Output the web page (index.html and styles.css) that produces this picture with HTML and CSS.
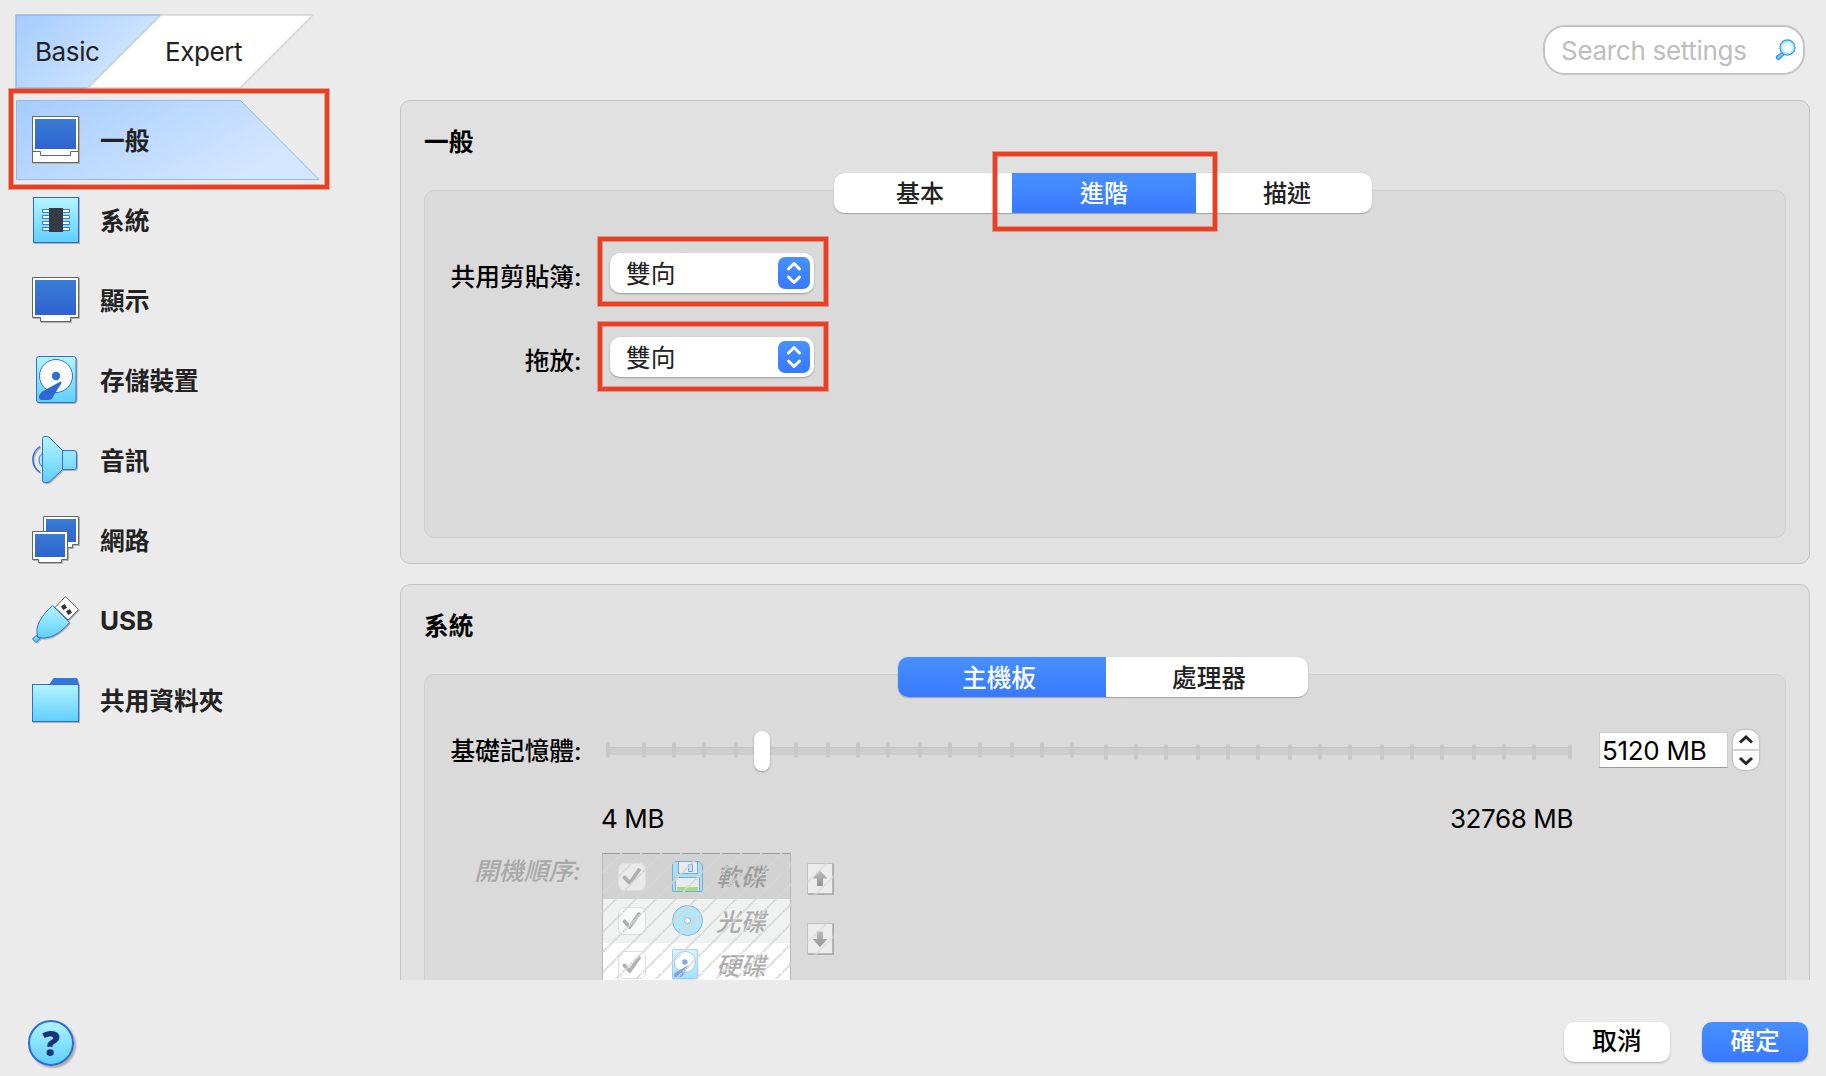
FILE: index.html
```html
<!DOCTYPE html>
<html lang="zh-Hant">
<head>
<meta charset="utf-8">
<title>設定</title>
<link rel="stylesheet" href="styles.css">
</head>
<body>
<svg class="defs" width="0" height="0" aria-hidden="true">
  <defs>
    <linearGradient id="cyan" x1="0" y1="0" x2="0" y2="1"><stop offset="0" stop-color="#b5f5ff"/><stop offset="1" stop-color="#60cfff"/></linearGradient>
    <linearGradient id="blue" x1="0" y1="0" x2="0" y2="1"><stop offset="0" stop-color="#387dd2"/><stop offset="1" stop-color="#2f62d2"/></linearGradient>
    <linearGradient id="tab" x1="0" y1="0" x2="1" y2=".5"><stop offset="0" stop-color="#a5ccff"/><stop offset="1" stop-color="#d5e7ff"/></linearGradient>
    <linearGradient id="arrow" x1="0" y1="0" x2="0" y2="1"><stop offset="0" stop-color="#bdbdbd"/><stop offset="1" stop-color="#939393"/></linearGradient>
    <pattern id="hatch" width="20" height="20" patternUnits="userSpaceOnUse"><path d="M-1 21L21-1" stroke="#d6d6d6" stroke-width="2" stroke-dasharray="2.2 .6"/></pattern>
    <symbol id="disk" viewBox="0 0 42 48"><rect x=".5" y=".5" width="39.500" height="46" rx="2.500" fill="url(#cyan)" stroke="#3070d6"/><circle cx="20" cy="20" r="16.500" fill="#fff" stroke="#3070d6"/><circle cx="20" cy="20" r="4.200" fill="#2f6fd4"/><path d="M24.500 25.500L9 34C4 37 3 39 3 41c0 2 1 3 3 3h6c3 0 5-2 6-5l7-11c1-2 0-3-.5-2.500z" fill="#2f67d4"/></symbol>
  </defs>
</svg>
<div class="window">
  <header class="topbar">
    <div class="modes">
      <svg class="modes-shape" width="302" height="76"><path d="M1 1H146L73 74H1z" fill="url(#tab)" stroke="#93b9ea" stroke-width="1.500"/><path d="M146 1H298L225 74H73z" fill="#fff" stroke="#d4d4d4" stroke-width="1.500"/></svg>
      <span class="mode basic">Basic</span><span class="mode expert">Expert</span>
    </div>
    <div class="search"><span>Search settings</span>
      <svg width="22" height="22" viewBox="0 0 22 22"><path d="M8 13l-6 4c-1.500 1.500 0 4 2 3.500L9.500 15" fill="#62d0fb" stroke="#3f8fe8" stroke-width="1.200"/><circle cx="12.500" cy="8.500" r="7.500" fill="#f3fdff" stroke="#4598ed" stroke-width="1.400"/><circle cx="12.500" cy="8.500" r="6.100" fill="none" stroke="#9ce8fc" stroke-width="1.500"/></svg>
    </div>
  </header>

  <div class="content">
    <nav class="sidebar">
      <div class="item active">
        <svg class="item-shape" width="305" height="81"><path d="M.5.500H224.500L303 79.500H.5z" fill="url(#tab)" stroke="#93b9ea"/></svg>
        <svg class="icon" viewBox="0 0 48 48"><rect x=".5" y=".5" width="46" height="46" fill="#fff" stroke="#666"/><rect x="3" y="3" width="41" height="30" fill="url(#blue)"/><path d="M.5 35.500H8.500V39.500H38.500V35.500H46.500" fill="none" stroke="#666"/></svg>
        <span>一般</span>
      </div>
      <div class="item">
        <svg class="icon" viewBox="0 0 48 48"><rect x="1.500" y="1.500" width="45" height="45" fill="url(#cyan)" stroke="#2f68d4"/><g fill="#fff" stroke="#327bd0"><path d="M10.500 13.500h27v3h-27zM10.500 19.500h27v3h-27zM10.500 25.500h27v3h-27zM10.500 31.500h27v3h-27z"/></g><rect x="17" y="12" width="14" height="24" fill="#363a45"/></svg>
        <span>系統</span>
      </div>
      <div class="item">
        <svg class="icon" viewBox="0 0 48 48"><path d="M.5 1.500H46.500V41.500H38.500V45.500H8.500V41.500H.5z" fill="#fff" stroke="#666"/><rect x="3" y="4" width="41" height="35" fill="url(#blue)"/></svg>
        <span>顯示</span>
      </div>
      <div class="item">
        <svg class="icon" viewBox="0 0 48 48"><use href="#disk" x="4" y="0" width="42" height="48"/></svg>
        <span>存儲裝置</span>
      </div>
      <div class="item">
        <svg class="icon" viewBox="0 0 48 48"><path d="M8 10.500C-1.500 17-1.500 30 8 36.500" fill="none" stroke="#3070d6" stroke-width="1.500"/><path d="M10.500 18C6 18 6 30 10.500 30" fill="#a5edfd" stroke="#3070d6"/><path d="M10.500 2.500Q10.500.500 13 .500H15Q17 .500 18.500 2.500L30.500 14.500H42Q44.500 14.500 44.500 17V31Q44.500 33.500 42 33.500H30.500L18.500 45Q17 46.500 15 46.500H13Q10.500 46.500 10.500 44.500z" fill="url(#cyan)" stroke="#3070d6"/><path d="M30.500 14.500v19" stroke="#3070d6"/></svg>
        <span>音訊</span>
      </div>
      <div class="item">
        <svg class="icon" viewBox="0 0 48 48"><path d="M11.500.500H46.500V28.500H40.500V31.500H17.500V28.500H11.500z" fill="#fff" stroke="#666"/><rect x="14" y="3" width="30" height="23" fill="url(#blue)"/><path d="M.5 15.500H35.500V43.500H29.500V46.500H6.500V43.500H.5z" fill="#fff" stroke="#666"/><rect x="3" y="18" width="30" height="23" fill="url(#blue)"/></svg>
        <span>網路</span>
      </div>
      <div class="item">
        <svg class="icon" viewBox="0 0 48 48"><path d="M23 11.500L33.500.500 46.500 13.500 36 24z" fill="#fff" stroke="#666"/><path d="M29.500 10.500l3-2 2 3-3 2zM34.500 15.500l3-2 2 3-3 2z" fill="#333" stroke="#333"/><path d="M20.500 9.500L37.500 26.500C28 38 17 44 6.500 41.500C2 33 7 22 20.500 9.500z" fill="url(#cyan)" stroke="#3070d6"/><path d="M4 39.500L.5 43 4 46.500 8 42.500z" fill="#6bd2fa" stroke="#3070d6"/></svg>
        <span class="latin">USB</span>
      </div>
      <div class="item">
        <svg class="icon" viewBox="0 0 48 48"><path d="M17 9L21.500 2H45L47 9z" fill="#3577d6"/><rect x=".5" y="8.500" width="46" height="37" fill="url(#cyan)" stroke="#306fd6"/></svg>
        <span>共用資料夾</span>
      </div>
    </nav>

    <main class="pages">
      <section class="panel general">
        <h2>一般</h2>
        <div class="box">
          <div class="segments three"><span>基本</span><span class="on">進階</span><span>描述</span></div>
          <div class="field"><label>共用剪貼簿:</label>
            <div class="combo"><span>雙向</span><svg class="knob" viewBox="0 0 32 32"><path d="M10.500 12L16 6.500 21.500 12M10.500 20L16 25.500 21.500 20"/></svg></div></div>
          <div class="field"><label>拖放:</label>
            <div class="combo"><span>雙向</span><svg class="knob" viewBox="0 0 32 32"><path d="M10.500 12L16 6.500 21.500 12M10.500 20L16 25.500 21.500 20"/></svg></div></div>
        </div>
      </section>

      <section class="panel system">
        <h2>系統</h2>
        <div class="box">
          <div class="segments two"><span class="on">主機板</span><span>處理器</span></div>
          <div class="memory">
            <label>基礎記憶體:</label>
            <svg class="slider" width="974" height="48" viewBox="602 727 974 48">
              <rect x="606" y="747" width="966" height="8" fill="#cecece"/><path d="M606 747.500H1572" stroke="#c6c6c6"/>
              <path d="M608 744v12M644 744v12M674 744v12M704 744v12M736 744v12M796 744v12M828 744v12M858 744v12M888 744v12M920 744v12M950 744v12M980 744v12M1012 744v12M1042 744v12M1072 744v12M1106 746v12M1136 746v12M1166 746v12M1198 746v12M1228 746v12M1258 746v12M1290 746v12M1320 746v12M1350 746v12M1382 746v12M1412 746v12M1442 746v12M1474 746v12M1504 746v12M1534 746v12M1570 746v12" stroke="#c8c8c8" stroke-width="4" stroke-linecap="round"/>
              <rect class="thumb" x="754" y="731" width="16" height="40" rx="8" fill="#fff"/>
            </svg>
            <span class="amount">5120 MB</span>
            <svg class="spinner" viewBox="0 0 26 40"><path d="M0 20H26" stroke="#d2d2d2" stroke-width="2"/><path d="M7 12.500L13 7l6 5.500M7 28l6 5.500L19 28" fill="none" stroke="#262626" stroke-width="3"/></svg>
          </div>
          <div class="range"><span>4 MB</span><span>32768 MB</span></div>
          <div class="boot">
            <label>開機順序:</label>
            <div class="list">
              <div class="row r1"><svg class="check" viewBox="0 0 28 28"><path d="M6 14.500l5.500 6L21.500 6.500"/></svg>
                <svg class="device" viewBox="0 0 32 32"><path d="M.5.500H27L30.500 4V30.500H.5z" fill="#aedde9" stroke="#78a9df"/><path d="M6.500.500H25.500V12.500H6.500zM3.500 16.500H27.500V30.500H3.500z" fill="#e9ecef" stroke="#78a9df"/><path d="M16.500 3.500h4v7h-4z" fill="#bce5f3" stroke="#78a9df"/><path d="M5 26h21v4H5z" fill="#a9dc7c"/></svg><span>軟碟</span></div>
              <div class="row r2"><svg class="check" viewBox="0 0 28 28"><path d="M6 14.500l5.500 6L21.500 6.500"/></svg>
                <svg class="device" viewBox="0 0 32 32"><circle cx="15.500" cy="15.500" r="15" fill="#b5e6f5" stroke="#84b2e8"/><circle cx="15.500" cy="15.500" r="3" fill="#fff" stroke="#84b2e8"/></svg><span>光碟</span></div>
              <div class="row r3"><svg class="check" viewBox="0 0 28 28"><path d="M6 14.500l5.500 6L21.500 6.500"/></svg>
                <svg class="device faded" viewBox="0 0 32 32"><use href="#disk" x="0" y="0" width="27" height="31"/></svg><span>硬碟</span></div>
              <svg class="hatch" width="189" height="126"><rect width="189" height="126" fill="url(#hatch)"/></svg>
            </div>
            <div class="movers">
              <svg width="27" height="32"><path d="M.5.500H26.500V31.500H.5z" fill="#ececec" stroke="#c0c0c0"/><path d="M1 31H26V1" fill="none" stroke="#a5a5a5" stroke-width="1.500"/><path d="M13 7.500L20.500 15.500H16V23H10V15.500H5.500z" fill="url(#arrow)"/><rect width="27" height="32" fill="url(#hatch)" opacity=".7"/></svg>
              <svg width="27" height="32"><path d="M.5.500H26.500V31.500H.5z" fill="#ececec" stroke="#c0c0c0"/><path d="M1 31H26V1" fill="none" stroke="#a5a5a5" stroke-width="1.500"/><path d="M13 24L20.500 16H16V8.500H10V16H5.500z" fill="url(#arrow)"/><rect width="27" height="32" fill="url(#hatch)" opacity=".7"/></svg>
            </div>
          </div>
        </div>
      </section>
    </main>
  </div>

  <footer class="footer">
    <div class="help">?</div>
    <div class="actions"><div class="button">取消</div><div class="button primary">確定</div></div>
  </footer>
  <div class="mark m1"></div><div class="mark m2"></div><div class="mark m3"></div><div class="mark m4"></div>
</div>
</body>
</html>
```
FILE: styles.css
```css
* { box-sizing: border-box; }
body { margin: 0; background: #ebebeb; color: #000; font: 24.7px/36px Inter, "Noto Sans CJK TC", sans-serif; overflow: hidden; }
.defs { position: absolute; }
.window { position: relative; width: 1826px; height: 1076px; display: flex; flex-direction: column; }
svg { display: block; flex: none; }
span, label { white-space: nowrap; }

.topbar { height: 100px; flex: none; display: flex; justify-content: space-between; padding: 14px 21px 0 15px; }
.modes { position: relative; width: 302px; height: 76px; display: flex; align-items: center; font-size: 26px; color: #222; padding: 0 0 1px 20px; }
.modes-shape, .item-shape { position: absolute; left: 0; top: 0; }
.mode { position: relative; letter-spacing: -.4px; }
.basic { width: 130px; }
.search { width: 262px; height: 50px; margin-top: 11px; border: 2px solid #c3c3c3; border-radius: 22px; background: #fff; display: flex; align-items: center; justify-content: space-between; padding: 0 6px 0 16px; color: #bdbdbd; font-size: 26px; letter-spacing: -.3px; }
.search span { padding-top: 2px; }

.content { display: flex; height: 880px; flex: none; }
.sidebar { width: 400px; padding-left: 16px; color: #222; font-weight: 700; }
.item { position: relative; height: 80px; display: flex; align-items: center; gap: 20px; padding-left: 16px; }
.icon { position: relative; width: 48px; height: 48px; overflow: visible; filter: drop-shadow(1px 1px 0 #b0b0b0); }
.item span { position: relative; padding-top: 2px; }
.latin { font-size: 26px; }

.pages { width: 1410px; display: flex; flex-direction: column; gap: 20px; overflow: hidden; }
.panel { flex: none; background: #e1e1e1; border: 1px solid #c4c4c4; border-radius: 10px; padding: 23px; }
.general, .system { height: 464px; }
h2 { margin: 0 0 30px; font-size: 24.7px; line-height: 36px; font-weight: 700; }
.box { background: #dadada; border: 1px solid #d0d0d0; border-radius: 10px; height: 348px; }
.segments { display: flex; height: 40px; margin-top: -18px; border-radius: 10px; background: #fff; box-shadow: 0 1px 1px #a2a2a2, 0 0 1px #aaa; overflow: hidden; font-weight: 500; color: #222; }
.segments span { text-align: center; line-height: 42px; }
.three { width: 538px; margin-left: 409px; font-size: 24px; }
.three span { width: 178px; padding-right: 6px; }
.three .on { width: 184px; padding-right: 0; }
.three span:last-child { width: 176px; padding: 0 0 0 6px; }
.two { width: 410px; margin-left: 473px; }
.two span { width: 202px; padding-left: 4px; }
.two .on { width: 208px; padding: 0 6px 0 0; }
.on, .primary, .knob { background: linear-gradient(#4890ff, #3779ff); }
.segments .on { color: #fff; }
.field { display: flex; height: 40px; margin-top: 40px; }
.field + .field { margin-top: 44px; }
.field label, .memory label, .boot label { width: 156.500px; margin-right: .5px; text-align: right; flex: none; font-weight: 500; }
.field label { line-height: 48px; }
.combo { width: 204px; height: 40px; margin-left: 28px; padding: 0 4px 0 16px; display: flex; align-items: center; justify-content: space-between; background: #fff; border-radius: 10px; box-shadow: 0 1px 2px #999; color: #222; }
.combo span { padding-top: 2px; }
.knob { width: 32px; height: 32px; border-radius: 7px; fill: none; stroke: #fff; stroke-width: 3; stroke-linecap: round; stroke-linejoin: round; }

.memory { height: 48px; margin-top: 30px; display: flex; align-items: center; }
.slider { margin-left: 20px; }
.thumb { filter: drop-shadow(0 1px 1px #999); }
.amount { width: 129px; height: 36px; margin: -2px 0 0 23px; padding-left: 2px; background: #fff; border: 1px solid #ccc; border-bottom-color: #999; font-size: 26px; line-height: 35px; letter-spacing: -.3px; }
.spinner { width: 26px; height: 40px; margin: -3px 0 0 5px; background: #fff; border-radius: 10px; box-shadow: 0 0 2px #888; }
.range { display: flex; justify-content: space-between; width: 972px; margin-left: 176px; margin-top: 26px; font-size: 26px; letter-spacing: -.4px; }
.boot { display: flex; margin-top: 16px; }
.boot label { color: #a8a8a8; font-style: italic; width: 155.500px; margin-right: 1.500px; }
.list { position: relative; width: 189px; height: 140px; margin-left: 20px; border: 1px solid #b8b8b8; border-top-color: #999; }
.row { height: 44px; display: flex; align-items: center; padding-left: 15px; font-style: italic; font-weight: 500; color: #acacac; }
.r1 { height: 45px; background: #d2d2d2; color: #9c9c9c; }
.r2 { background: #f0f2f2; }
.r3 { background: #fff; }
.check { width: 28px; height: 28px; border: 1px solid #ddd; border-radius: 6px; background: #ffffff80; fill: none; stroke: #b0b0b0; stroke-width: 4; stroke-linecap: round; stroke-linejoin: round; }
.device { width: 32px; height: 32px; margin-left: 26px; margin-right: 12px; }
.row span { padding-top: 1px; }
.faded { opacity: .6; }
.hatch { position: absolute; left: -1px; top: -1px; }
.movers { margin: 10px 0 0 16px; display: flex; flex-direction: column; gap: 28px; }

.footer { flex: 1; display: flex; justify-content: space-between; align-items: flex-start; padding: 40px 18px 0 28px; }
.help { width: 46px; height: 46px; border: 2px solid #2f6bd6; border-radius: 50%; background: linear-gradient(#aff3ff, #60d0ff); box-shadow: 2px 2px 2px #aaa; color: #163678; font: 900 35px/42px "Noto Sans", sans-serif; text-align: center; }
.actions { display: flex; gap: 32px; padding-top: 2px; }
.button { width: 106px; height: 40px; border-radius: 10px; background: #fff; box-shadow: 0 1px 2px #aaa; text-align: center; line-height: 39px; font-weight: 500; }
.button.primary { background: linear-gradient(#4890ff, #3779ff); color: #fff; }
.mark { position: absolute; border: 4px solid #e84025; box-shadow: 0 0 0 1px #e8402570, inset 0 0 0 1px #e8402570; }
.m1 { left: 9px; top: 89px; width: 320px; height: 100px; }
.m2 { left: 993px; top: 152px; width: 224px; height: 79px; }
.m3 { left: 598px; top: 237px; width: 230px; height: 69px; }
.m4 { left: 598px; top: 322px; width: 230px; height: 69px; }
```
